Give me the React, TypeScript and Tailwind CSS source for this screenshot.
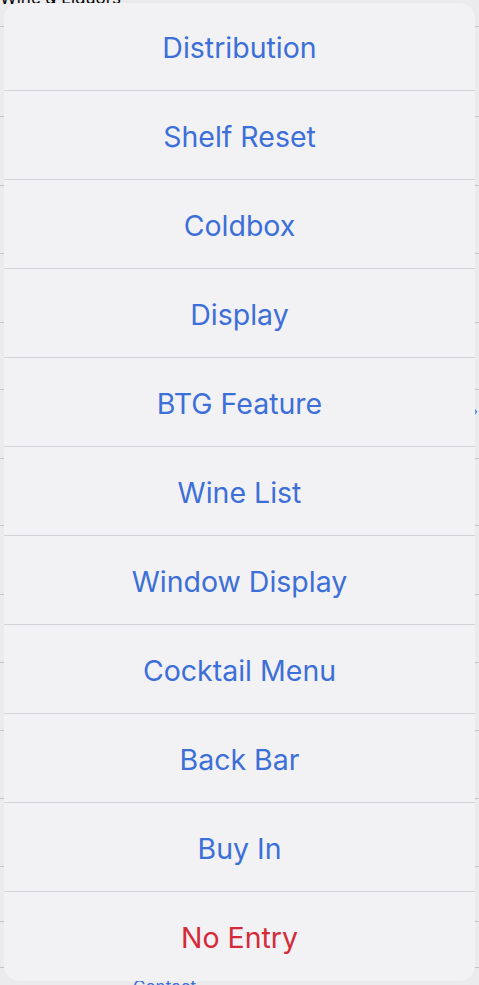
import React from 'react';

const options = [
  'Distribution',
  'Shelf Reset',
  'Coldbox',
  'Display',
  'BTG Feature',
  'Wine List',
  'Window Display',
  'Cocktail Menu',
  'Back Bar',
  'Buy In',
];

const bgLines = [26, 116, 185, 253, 322, 389, 458, 525, 594, 662, 730, 798, 866, 921, 967];

const App: React.FC = () => {
  return (
    <div
      className="relative w-[479px] h-[985px] overflow-hidden bg-[#ebebed]"
      style={{ fontFamily: 'Inter, "Noto Sans", sans-serif' }}
    >
      {/* page behind the sheet */}
      <div className="absolute inset-0">
        <div className="absolute left-0 top-[-10px] text-[17px] text-black leading-none">Wine &amp; Liquors</div>
        {bgLines.map(y => (
          <div key={y} className="absolute left-0 right-0 h-px bg-[#c4c4c8]" style={{ top: y }} />
        ))}
        <div className="absolute right-[1px] top-[404px] text-[14px] text-[#3d6fd8] leading-none">›</div>
        <div className="absolute left-[133px] top-[979px] text-[17px] text-[#3d6fd8] leading-none">Contact</div>
      </div>

      {/* action sheet */}
      <div className="absolute left-[4px] top-[3px] w-[471px] rounded-[16px] overflow-hidden bg-[#f2f2f5] flex flex-col">
        {options.map(o => (
          <div key={o} className="h-[89px] pt-[4px] border-b border-[#d3d3d7] flex items-center justify-center text-[28.5px] text-[#3d6fd8] first:h-[88px]">
            {o}
          </div>
        ))}
        <div className="h-[89px] pt-[4px] flex items-center justify-center text-[28.5px] text-[#d42a3a]">No Entry</div>
      </div>
    </div>
  );
};

export default App;
